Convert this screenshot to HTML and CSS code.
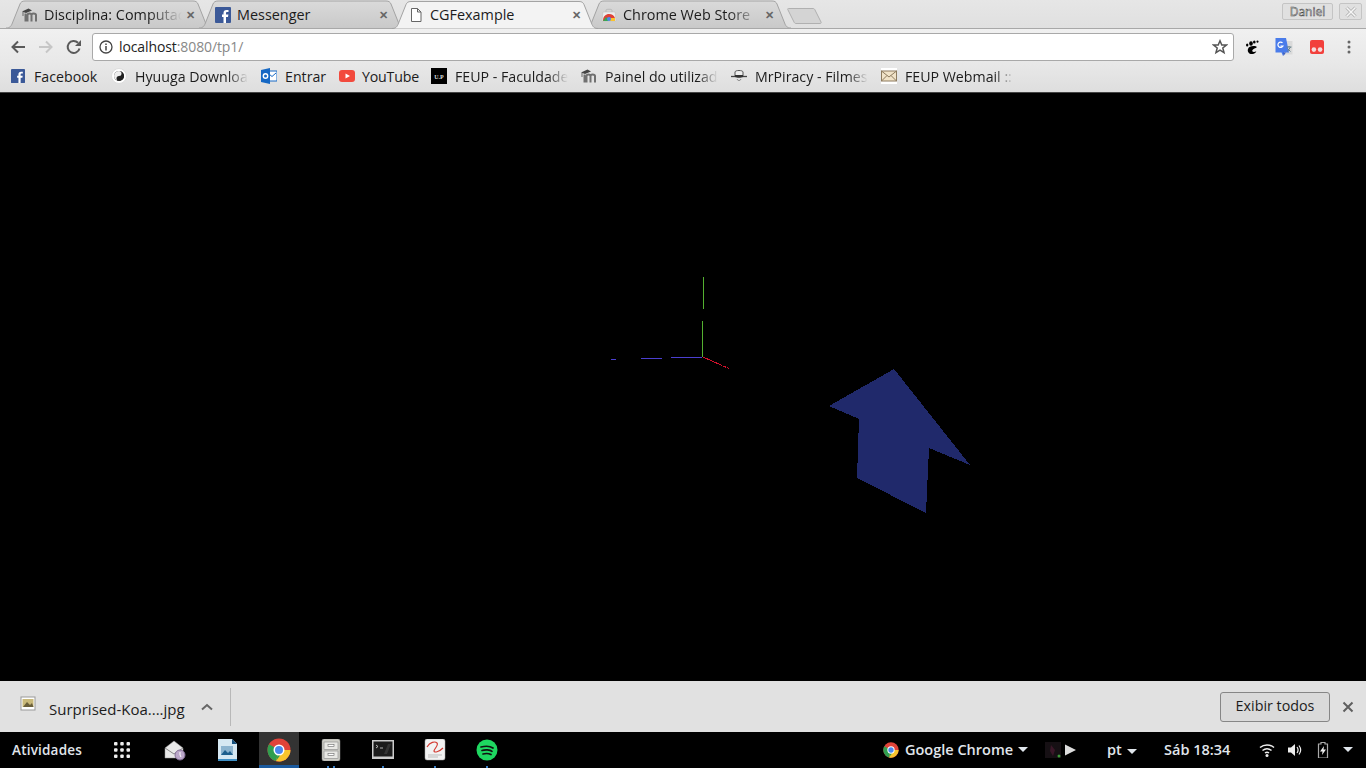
FILE: index.html
```html
<!DOCTYPE html>
<html lang="pt">
<head>
<meta charset="utf-8">
<title>CGFexample</title>
<link rel="stylesheet" href="styles.css">
</head>
<body>
<svg class="defs" width="0" height="0" aria-hidden="true">
  <symbol id="fb" viewBox="0 0 16 16"><rect width="16" height="16" rx="1" fill="#3b5998"/><path d="M11 16V10h2l.4-2.4H11V6.2c0-.8.3-1.2 1.2-1.2h1.3V3h-2c-2 0-3 1.2-3 3v1.6H7V10h1.500v6z" fill="#fff"/></symbol>
  <symbol id="moodle" viewBox="0 0 16 16"><path d="M0 4.500 6.500 1.500l3.500 2L4 6z" fill="#444"/><path d="M1 5v4" stroke="#666" fill="none"/><path d="M5.500 14.500V8c0-1 1-1.500 2-1.500S9.500 7 9.500 8v6.500M9.500 8c0-1 1-1.500 2-1.500s2.500.5 2.500 1.500v6.500M3.500 14.500V6.500" stroke="#707070" stroke-width="2" fill="none"/></symbol>
  <symbol id="chromeicon" viewBox="0 0 24 24"><circle cx="12" cy="12" r="11.500" fill="#e0433a"/><path d="M12 12 2 6.300A11.500 11.500 0 0 0 9 23.100z" fill="#2f9e4f"/><path d="M12 12h11.500A11.500 11.500 0 0 1 9 23.100z" fill="#f7c52e"/><path d="M12 12 9 23.100 17 12z" fill="#2f9e4f"/><circle cx="12" cy="12" r="5.500" fill="#fff"/><circle cx="12" cy="12" r="4" fill="#4a88ee"/></symbol>
  <symbol id="tabshape" viewBox="0 0 206 28"><path d="M0 28C4 28 5 26 6 24L14 4C15 2 16 1 19 1H187C190 1 191 2 192 4L200 24C201 26 202 28 206 28"/></symbol>
  <linearGradient id="tabfill" x1="0" y1="0" x2="0" y2="1"><stop offset="0" stop-color="#dadada"/><stop offset="1" stop-color="#c9c9c9"/></linearGradient>
</svg>

<header class="chrome">
  <div class="tabstrip">
    <div class="tab">
      <svg class="tabbg"><use href="#tabshape"/></svg>
      <svg class="fav"><use href="#moodle"/></svg>
      <span class="tabtitle fade">Disciplina: Computac</span>
      <span class="tabclose">✕</span>
    </div>
    <div class="tab">
      <svg class="tabbg"><use href="#tabshape"/></svg>
      <svg class="fav"><use href="#fb"/></svg>
      <span class="tabtitle">Messenger</span>
      <span class="tabclose">✕</span>
    </div>
    <div class="tab active">
      <svg class="tabbg"><use href="#tabshape"/></svg>
      <svg class="fav" viewBox="0 0 16 16"><path d="M3.500 1.500h6l3.500 3.500v9.500h-9.500zM9.500 1.500V5H13" fill="#fff" stroke="#666"/></svg>
      <span class="tabtitle">CGFexample</span>
      <span class="tabclose">✕</span>
    </div>
    <div class="tab">
      <svg class="tabbg"><use href="#tabshape"/></svg>
      <svg class="fav" viewBox="0 0 16 16"><path d="M2 5h12l1 9H1z" fill="#eee" stroke="#bbb" stroke-width=".5"/><path d="M5 5V3c0-1 6-1 6 0v2" fill="none" stroke="#bbb"/><path d="M2 14c0-5 3-7 6-7s5 1.500 6 4l-4 .5H8l-3 2.500z" fill="#df4137"/><path d="M2 14l3-4 3 4z" fill="#39a853"/><path d="M8 14l1-3h5v3z" fill="#fbc22d"/><circle cx="8" cy="12" r="2" fill="#4a88ee"/></svg>
      <span class="tabtitle fade">Chrome Web Store</span>
      <span class="tabclose">✕</span>
    </div>
    <div class="newtab"><svg viewBox="0 0 36 18"><path d="M1.500 1.500H26c1 0 1.500.5 2 1.500l6 12c.5 1 0 1.500-1 1.500H9c-1 0-1.500-.5-2-1.500L1 3C.5 2 .5 1.500 1.500 1.500z"/></svg></div>
    <div class="winctl">
      <span class="winbtn user">Daniel</span>
      <span class="winbtn closebtn"><svg viewBox="0 0 12 12" width="12" height="12"><path d="M1.500 1.500l9 9M10.500 1.500l-9 9" stroke="#aaa" stroke-width="3"/><path d="M1.500 1.500l9 9M10.500 1.500l-9 9" stroke="#f6f6f6" stroke-width="1.600"/></svg></span>
    </div>
  </div>

  <div class="toolbar">
    <svg class="navicon" viewBox="0 0 16 16"><path d="M15 8H3M8 2.500 2.500 8 8 13.500" fill="none" stroke="#5a5a5a" stroke-width="2"/></svg>
    <svg class="navicon off" viewBox="0 0 16 16"><path d="M1 8h12M8 2.500 13.500 8 8 13.500" fill="none" stroke="#c6c6c6" stroke-width="2"/></svg>
    <svg class="navicon reload" viewBox="0 0 16 16"><path d="M13.500 9.500A6 6 0 1 1 12 3.800" fill="none" stroke="#5a5a5a" stroke-width="2"/><path d="M15 1v6H9z" fill="#5a5a5a"/></svg>
    <div class="omnibox">
      <svg class="info" viewBox="0 0 14 14"><circle cx="7" cy="7" r="6" fill="none" stroke="#444" stroke-width="1.300"/><path d="M7 6v4.500M7 3.500v1.500" stroke="#444" stroke-width="1.500"/></svg>
      <span class="url"><span class="host">localhost</span>:8080/tp1/</span>
      <svg class="star" viewBox="0 0 16 16"><path d="M8 1.800 9.800 6h4.600l-3.600 3 1.200 4.600L8 11.100l-4 2.500L5.200 9 1.600 6h4.600z" fill="none" stroke="#555" stroke-width="1.500"/></svg>
    </div>
    <div class="exts">
      <svg class="ext foot" viewBox="0 0 16 16"><path d="M12.500 7.500c-3.500-1-7.500-.5-8.500 2.500s1.500 5.500 4.500 5c2-.3 3.500-1.500 3.800-2.800-1.300.8-3.300 1-4 0-.6-1 1-2.700 4.200-3.500z"/><ellipse cx="7" cy="4.500" rx="1.800" ry="2.200"/><ellipse cx="3.200" cy="6" rx="1.200" ry="1.600"/><ellipse cx="10.300" cy="3" rx="1.300" ry="1.500"/><ellipse cx="13.500" cy="2.600" rx="1" ry="1.200"/></svg>
      <svg class="ext gt" viewBox="0 0 18 18"><path d="M8 3h9.500v13.500H8z" fill="#dadada"/><path d="M.500 0h10.500l3 14.500H9L8 18l-1.500-3.500h-6z" fill="#4a7cea"/><path d="M8 14.500 8.500 18l2.500-3.500z" fill="#3b5fc0"/><path d="M7.500 4.800A2.700 2.700 0 1 0 8 8H5.500" fill="none" stroke="#fff" stroke-width="1.200"/><path d="M11.500 9h5M14 8v1M15.500 9l-3 4.500M12.500 10.500l3 3" stroke="#67828c" stroke-width="1" fill="none"/></svg>
      <svg class="ext tomato" viewBox="0 0 16 16"><rect x="1" y="1" width="14" height="14" rx="2" fill="#f2403c"/><circle cx="4.900" cy="10.600" r="2.300" fill="#f4dcdc"/><circle cx="11.100" cy="10.600" r="2.300" fill="#f4dcdc"/></svg>
      <svg class="ext dots" viewBox="0 0 14 16"><circle cx="7" cy="3" r="1.500"/><circle cx="7" cy="8" r="1.500"/><circle cx="7" cy="13" r="1.500"/></svg>
    </div>
  </div>

  <nav class="bookmarks">
    <span class="bm b1"><svg class="bmicon fb"><use href="#fb"/></svg>Facebook</span>
    <span class="bm b2"><svg class="bmicon" viewBox="0 0 16 16"><circle cx="8" cy="8" r="7.500" fill="#fff" stroke="#ddd"/><circle cx="8" cy="8" r="5" fill="#222"/><path d="M8 3a2.500 2.500 0 0 1 0 5 2.500 2.500 0 0 0 0 5 5 5 0 0 0 0-10z" fill="#222"/><path d="M8 3a5 5 0 0 0 0 10 2.500 2.500 0 0 1 0-5 2.500 2.500 0 0 0 0-5z" fill="#eee"/></svg><span class="bmtext fade">Hyuuga Downloa</span></span>
    <span class="bm b3"><svg class="bmicon" viewBox="0 0 16 16"><rect x="5" y="3" width="11" height="10" fill="#fff" stroke="#1668c4"/><path d="M8 6l3 2.500L15 5" stroke="#1668c4" fill="none"/><path d="M0 2l9-2v16l-9-2z" fill="#1668c4"/><circle cx="4.500" cy="8" r="2.200" fill="none" stroke="#fff" stroke-width="1.400"/></svg>Entrar</span>
    <span class="bm b4"><svg class="bmicon yt" viewBox="0 0 16 16"><rect y="2" width="16" height="12" rx="3" fill="#f24a3d"/><path d="M6.500 5.500v5L11 8z" fill="#fff"/></svg>YouTube</span>
    <span class="bm b5"><svg class="bmicon" viewBox="0 0 16 16"><rect width="16" height="16" fill="#000"/><text x="8" y="10.500" class="uplogo">U.P</text></svg><span class="bmtext fade">FEUP - Faculdade</span></span>
    <span class="bm b6"><svg class="bmicon"><use href="#moodle"/></svg><span class="bmtext fade">Painel do utilizad</span></span>
    <span class="bm b7"><svg class="bmicon" viewBox="0 0 16 16"><path d="M0 8.500h16" stroke="#444" stroke-width="1.300"/><path d="M4 8V4c0-2 8-2 8 0v4z" fill="#eee" stroke="#555"/><path d="M4 7h8v2c-2 1-6 1-8 0z" fill="#333"/><path d="M6 11c1 2 3 2 4 0" stroke="#777" fill="none"/></svg><span class="bmtext fade">MrPiracy - Filmes</span></span>
    <span class="bm b8"><svg class="bmicon" viewBox="0 0 16 16"><rect width="16" height="16" fill="#fff"/><rect x="0.500" y="3" width="15" height="10" fill="#f1e3c8" stroke="#8d7b5e"/><path d="M.5 3 8 9l7.500-6M.5 13 6 7.500M15.500 13 10 7.500" fill="none" stroke="#8d7b5e"/></svg><span class="bmtext short fade">FEUP Webmail ::</span></span>
  </nav>
</header>

<main class="viewport">
  <svg class="scene" viewBox="0 93 1366 588">
    <polygon points="894,369 970,465 929,448 926,513 857,478 859,419 829,406" fill="#20296b"/>
    <path d="M703.500 277V309M702.500 321V357" stroke="#54b030" fill="none"/>
    <path d="M611 359.500H616M641 358.500H662M671 357.500H702" stroke="#4b3fd0" fill="none"/>
    <path d="M703 357 730 369" stroke="#d0102a" fill="none" stroke-dasharray="21 1 3 1 2 1 1 1"/>
  </svg>
</main>

<section class="downloads">
  <div class="dlitem">
    <svg class="dlicon" viewBox="0 0 16 16"><rect x="1" y="1" width="14" height="13" fill="#fff" stroke="#999"/><rect x="2.500" y="3" width="11" height="8" fill="#c9b97a"/><path d="M3 11 7 6l3 3 2-2 1.500 4z" fill="#6a5f3a"/></svg>
    <span class="dlname">Surprised-Koa....jpg</span>
    <svg class="chev" viewBox="0 0 12 8"><path d="M1 6.500 6 2l5 4.500" fill="none" stroke="#666" stroke-width="2"/></svg>
  </div>
  <div class="dlsep"></div>
  <button class="showall">Exibir todos</button>
  <svg class="dlclose" viewBox="0 0 12 12"><path d="M1.500 1.500l9 9M10.500 1.500l-9 9" stroke="#5f5f5f" stroke-width="2"/></svg>
</section>

<footer class="taskbar">
  <span class="activities">Atividades</span>
  <svg class="apps" viewBox="0 0 16 16"><g fill="#eee"><rect width="3.500" height="3.500" rx="1"/><rect x="6.250" width="3.500" height="3.500" rx="1"/><rect x="12.500" width="3.500" height="3.500" rx="1"/><rect y="6.250" width="3.500" height="3.500" rx="1"/><rect x="6.250" y="6.250" width="3.500" height="3.500" rx="1"/><rect x="12.500" y="6.250" width="3.500" height="3.500" rx="1"/><rect y="12.500" width="3.500" height="3.500" rx="1"/><rect x="6.250" y="12.500" width="3.500" height="3.500" rx="1"/><rect x="12.500" y="12.500" width="3.500" height="3.500" rx="1"/></g></svg>
  <div class="dock">
    <span class="dockitem"><svg class="dockicon" viewBox="0 0 22 22"><path d="M1 9 10 2l9 7v10H1z" fill="#e8e8e8" stroke="#999" stroke-width=".5"/><path d="M1 9l9 6 9-6" fill="none" stroke="#888"/><circle cx="16" cy="16" r="5" fill="#bba7c9" stroke="#836f96"/><path d="M16 13v3l1 2" stroke="#fff" fill="none"/></svg></span>
    <span class="dockitem"><svg class="dockicon" viewBox="0 0 22 22"><path d="M2 0h14l5 5v17H2z" fill="#d6e8f2"/><path d="M16 0l5 5h-5z" fill="#14507e"/><rect x="5" y="7" width="12" height="9" fill="#8cb4cf"/><path d="M5 16l4-5 3 3 2-2 3 4z" fill="#1d5f8d"/><rect x="2" y="20" width="19" height="2" fill="#3f8fc4"/></svg></span>
    <span class="dockitem on"><svg class="dockicon big"><use href="#chromeicon"/></svg></span>
    <span class="dockitem two"><svg class="dockicon" viewBox="0 0 22 22"><rect x="2" y="0" width="18" height="22" rx="2" fill="#cfcfc8" stroke="#888" stroke-width=".5"/><rect x="4" y="3" width="14" height="7.500" fill="#e8e8e4" stroke="#888" stroke-width=".6"/><rect x="4" y="12" width="14" height="7.500" fill="#e8e8e4" stroke="#888" stroke-width=".6"/><rect x="8" y="5.500" width="6" height="2" fill="#fff" stroke="#666" stroke-width=".6"/><rect x="8" y="14.500" width="6" height="2" fill="#fff" stroke="#666" stroke-width=".6"/></svg></span>
    <span class="dockitem one"><svg class="dockicon" viewBox="0 0 22 22"><rect y="1" width="22" height="19" fill="#ccc"/><rect x="1.500" y="2.500" width="19" height="15" fill="#1c1c1c"/><path d="M4 6l2 1.500L4 9M8 9h3" stroke="#ddd" fill="none" stroke-width=".8"/><path d="M12 15l4-10h3l-4 10z" fill="#333"/></svg></span>
    <span class="dockitem one"><svg class="dockicon" viewBox="0 0 22 22"><rect x="1" y="0" width="20" height="21" rx="2" fill="#f2f2f2" stroke="#aaa" stroke-width=".5"/><path d="M3 8c3-5 8-6 10-4s-3 6-3 8 5 1 9-3" fill="none" stroke="#d33b32" stroke-width="1.200"/><path d="M4 16h14M4 18h10" stroke="#bbb"/></svg></span>
    <span class="dockitem one"><svg class="dockicon" viewBox="0 0 22 22"><circle cx="11" cy="11" r="10.500" fill="#1ed760"/><path d="M5 8c4-1 9-1 12 1M6 11.500c3-1 8-.8 10 .8M7 15c3-.8 6-.5 8 .6" fill="none" stroke="#111" stroke-width="1.700" stroke-linecap="round"/></svg></span>
  </div>
  <div class="tray">
    <span class="appmenu"><svg class="trayicon chromesm"><use href="#chromeicon"/></svg>Google Chrome<i class="caret"></i></span>
    <span class="player"><svg class="album" viewBox="0 0 16 16"><rect width="16" height="16" fill="#161014"/><path d="M6 3l4 5-2 6-3-5z" fill="#3a1728"/><circle cx="14" cy="14" r="1.500" fill="#3f9b3a"/></svg><svg class="play" viewBox="0 0 10 10"><path d="M0 0l10 5-10 5z" fill="#ddd"/></svg></span>
    <span class="lang">pt<i class="caret"></i></span>
    <span class="clock">Sáb 18:34</span>
    <span class="status">
      <svg class="stat" viewBox="0 0 16 16"><path d="M1 5.500c4-3.500 10-3.500 14 0M3.500 8.500c3-2.300 6-2.300 9 0M6 11c1.300-1 2.700-1 4 0" fill="none" stroke="#eee" stroke-width="1.500"/><circle cx="8" cy="13.500" r="1.500" fill="#eee"/></svg>
      <svg class="stat" viewBox="0 0 16 16"><path d="M1 5.500h3L8 2v12L4 10.500H1z" fill="#eee"/><path d="M10 5c1.300 1.800 1.300 4.200 0 6M12 3.500c2 2.700 2 6.300 0 9" stroke="#eee" stroke-width="1.200" fill="none"/></svg>
      <svg class="stat" viewBox="0 0 16 16"><path d="M6 0.500h4v1.500h2.500v14h-9V2H6z" fill="none" stroke="#aaa" stroke-width="1.200"/><path d="M9 4 5 9.500h2.500L7 13l4-5.500H8.500z" fill="#eee"/></svg>
      <i class="caret statcaret"></i>
    </span>
  </div>
</footer>
</body>
</html>
```

FILE: styles.css
```css
* { box-sizing: border-box; }
html, body { margin: 0; height: 100%; }
body {
  width: 1366px; height: 768px; overflow: hidden;
  display: flex; flex-direction: column;
  background: #000;
  font-family: "Open Sans", "Noto Sans", sans-serif;
  font-size: 14.2px; color: #1c1c1c;
}
.defs { position: absolute; }
svg { display: block; flex: none; }

.chrome { flex: none; height: 93px; background: #e3e3e3; border-bottom: 1px solid #444; display: flex; flex-direction: column; }

.tabstrip { height: 29px; flex: none; display: flex; padding-left: 6px; background: linear-gradient(#e6e6e6, #e0e0e0); border-bottom: 1px solid #a8a8a8; position: relative; }
.tab { width: 206px; height: 29px; margin-right: -13px; position: relative; display: flex; align-items: center; padding: 0 16px 0 16px; }
.tabbg { position: absolute; left: 0; top: 0; width: 206px; height: 28px; fill: url(#tabfill); stroke: #a3a3a3; stroke-width: 1; }
.tab.active { z-index: 2; }
.tab.active .tabbg { fill: #f3f3f3; height: 29px; }
.fav { width: 16px; height: 16px; position: relative; margin-right: 6px; }
.tabtitle { position: relative; width: 142px; white-space: nowrap; overflow: hidden; flex: none; font-size: 14.4px; }
.fade { -webkit-mask-image: linear-gradient(90deg, #000 82%, transparent 100%); mask-image: linear-gradient(90deg, #000 82%, transparent 100%); }
.tabtitle.fade { -webkit-mask-image: linear-gradient(90deg, #000 105px, transparent 138px); mask-image: linear-gradient(90deg, #000 105px, transparent 138px); }
.tabclose { position: relative; font-size: 11px; font-weight: 700; color: #666; margin-left: auto; margin-right: 3px; }
.newtab { width: 36px; height: 18px; margin: 7px 0 0 9px; flex: none; }
.newtab svg { width: 36px; height: 18px; fill: #d4d4d4; stroke: #b0b0b0; }
.winctl { margin-left: auto; display: flex; gap: 6px; padding: 3px 4px 0 0; align-items: flex-start; }
.winbtn { height: 17px; background: #e0e0e0; border: 1px solid #c4c4c4; border-radius: 2px; display: flex; align-items: center; justify-content: center; }
.user { width: 51px; font-size: 12px; color: #f4f4f4; -webkit-text-stroke: .5px #444; }
.closebtn { width: 23px; }

.toolbar { height: 35px; flex: none; display: flex; align-items: center; background: linear-gradient(#f0f0f0, #e8e8e8); padding: 0 10px; }
.navicon { width: 16px; height: 16px; margin-right: 12px; }
.navicon.reload { margin-right: 10px; }
.omnibox { width: 1142px; height: 28px; background: #fff; border: 1px solid #a9a9a9; border-radius: 3px; display: flex; align-items: center; padding: 0 5px 0 6px; }
.info { width: 14px; height: 14px; margin-right: 6px; }
.url { font-size: 14px; color: #888; letter-spacing: -.1px; }
.host { color: #222; }
.star { width: 16px; height: 16px; margin-left: auto; }
.exts { display: flex; align-items: center; margin-left: 10px; gap: 15px; }
.ext { width: 16px; height: 16px; }
.ext.gt { width: 18px; height: 18px; margin-right: -1px; }
.ext.tomato { margin-left: 2px; }
.ext.dots { fill: #666; margin-left: 2px; width: 14px; }

.bookmarks { height: 28px; flex: none; display: flex; align-items: center; padding: 0 0 4px 10px; background: linear-gradient(#e8e8e8, #dedede); }
.bm { display: flex; align-items: center; white-space: nowrap; flex: none; }
.bmicon { width: 16px; height: 16px; margin-right: 8px; }
.bmicon.fb { width: 14px; height: 14px; margin: 0 9px 0 1px; }
.bmicon.yt { margin-right: 7px; }
.b4 { letter-spacing: -.2px; }
.uplogo { font: 700 6px "Liberation Serif", serif; fill: #ddd; text-anchor: middle; letter-spacing: 0; }
.bmtext { display: block; width: 113px; overflow: hidden; }
.bmtext.short { width: 109px; }
.b1 { width: 101px; } .b2 { width: 150px; } .b3 { width: 78px; } .b4 { width: 92px; }
.b5 { width: 150px; } .b6 { width: 150px; } .b7 { width: 150px; } .b8 { width: 133px; }

.viewport { flex: 1; background: #000; min-height: 0; }
.scene { width: 1366px; height: 588px; shape-rendering: crispEdges; }

.downloads { flex: none; height: 51px; background: #e1e1e1; display: flex; align-items: center; padding: 0 12px 0 20px; }
.dlitem { display: flex; align-items: center; width: 199px; }
.dlicon { width: 16px; height: 16px; margin: -6px 13px 0 0; }
.dlname { font-size: 15px; white-space: nowrap; padding-top: 5px; }
.chev { width: 12px; height: 8px; margin-left: auto; margin-right: 6px; }
.dlsep { width: 1px; height: 38px; background: #b8b8b8; margin-left: 11px; }
.showall { margin-left: auto; width: 110px; height: 30px; background: #dadada; border: 1px solid #868686; border-radius: 3px; font: 14.3px "Open Sans", "Noto Sans", sans-serif; color: #1c1c1c; padding: 0 0 2px; }
.dlclose { width: 12px; height: 12px; margin-left: 12px; }

.taskbar { flex: none; height: 36px; background: #000; display: flex; align-items: center; color: #e0e6ec; padding-left: 12px; font-size: 13.5px; font-weight: 600; }
.activities { width: 102px; letter-spacing: .2px; }
.apps { width: 16px; height: 16px; }
.dock { display: flex; margin-left: 19px; height: 36px; }
.dockitem { width: 52px; height: 36px; display: flex; align-items: center; justify-content: center; position: relative; }
.dockitem.on { width: 40px; background: #333; border-bottom: 3px solid #1b5a9e; margin: 0 6px; padding-top: 2px; }
.dockicon { width: 22px; height: 22px; }
.dockicon.big { width: 24px; height: 24px; }
.one::after { content: ""; position: absolute; left: 50%; bottom: 0; width: 2px; height: 2px; margin-left: -1px; background: #3a7fc6; }
.two::after { content: ""; position: absolute; left: 50%; bottom: 0; width: 2px; height: 2px; margin-left: -4px; background: #3a7fc6; box-shadow: 6px 0 #3a7fc6; }
.tray { margin-left: auto; display: flex; align-items: center; font-size: 14.5px; padding-bottom: 1px; }
.appmenu { display: flex; align-items: center; width: 162px; white-space: nowrap; }
.chromesm { width: 16px; height: 16px; margin-right: 6px; }
.caret { display: inline-block; width: 0; height: 0; border: 5px solid transparent; border-top: 5px solid #e0e6ec; border-bottom: 0; margin-left: 5px; vertical-align: middle; }
.player { display: flex; align-items: center; width: 62px; gap: 4px; }
.album { width: 16px; height: 16px; }
.play { width: 11px; height: 12px; }
.lang { width: 57px; }
.clock { width: 95px; white-space: nowrap; }
.status { display: flex; align-items: center; gap: 12px; width: 107px; }
.stat { width: 16px; height: 16px; }
.statcaret { margin-left: 0; }
```
